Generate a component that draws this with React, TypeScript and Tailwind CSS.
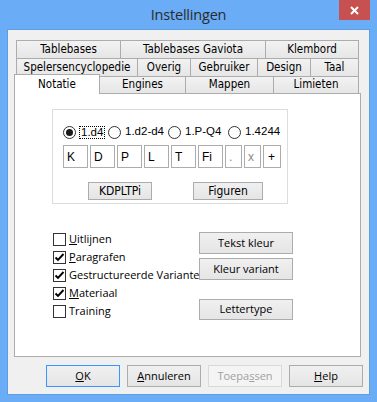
import React from "react";

function Check({ checked }: { checked?: boolean }) {
  return (
    <div className="w-[13px] h-[13px] border border-[#333333] bg-white flex items-center justify-center shrink-0">
      {checked && (
        <svg width="11" height="11" viewBox="0 0 11 11">
          <polyline points="1.5,5.5 4,8 9.5,2" fill="none" stroke="#000" strokeWidth="1.9" />
        </svg>
      )}
    </div>
  );
}

function Radio({ checked }: { checked?: boolean }) {
  return (
    <div className="w-[13px] h-[13px] rounded-full border border-[#333333] bg-white flex items-center justify-center shrink-0 mr-[3px]">
      {checked && <div className="w-[7px] h-[7px] rounded-full bg-[#1a1a1a]" />}
    </div>
  );
}

const btn =
  "border border-[#acacac] bg-linear-to-b from-[#f0f0f0] to-[#e5e5e5] flex items-center justify-center text-black";

const tab =
  "border-t border-[#acacac] bg-linear-to-b from-[#f2f2f2] to-[#e6e6e6] flex items-center justify-center";

export default function App() {
  return (
    <div className="w-[377px] h-[402px] bg-[#6aacf5] flex flex-col px-[7px] pb-[7px] relative overflow-hidden font-['Open_Sans',sans-serif]">
      <div className="h-[29px] flex items-center justify-center text-[14.5px] text-[#2b2b2b] tracking-[-0.2px]">
        Instellingen
      </div>
      <div className="absolute top-0 right-[7px] w-[31px] h-[20px] bg-[#c75050] flex items-center justify-center">
        <svg width="9" height="9" viewBox="0 0 9 9">
          <path d="M1 1 L8 8 M8 1 L1 8" stroke="#fff" strokeWidth="2" />
        </svg>
      </div>

      <div className="flex-1 border border-[#5b9ee6] bg-[#f0f0f0] flex flex-col">
        <div className="mt-[10px] ml-[6px] w-[347px] flex flex-col font-['DejaVu_Sans_Condensed','DejaVu_Sans',sans-serif] text-[11.5px] text-black">
          {/* row 1 */}
          <div className="flex h-[18px] ml-[2px]">
            <div className={`w-[104px] border-l ${tab}`}>Tablebases</div>
            <div className={`w-[145px] border-l ${tab}`}>Tablebases Gaviota</div>
            <div className={`w-[94px] border-l border-r ${tab}`}>Klembord</div>
          </div>
          {/* row 2 */}
          <div className="flex h-[18px] ml-[2px]">
            <div className={`w-[121px] border-l ${tab}`}>Spelersencyclopedie</div>
            <div className={`w-[53px] border-l ${tab}`}>Overig</div>
            <div className={`w-[67px] border-l ${tab}`}>Gebruiker</div>
            <div className={`w-[53px] border-l ${tab}`}>Design</div>
            <div className={`w-[49px] border-l border-r ${tab}`}>Taal</div>
          </div>
          {/* row 3 */}
          <div className="flex items-end -mt-[2px] h-[19px]">
            <div className="w-[86px] h-[20px] -mb-px relative z-10 border-l border-t border-r border-[#acacac] bg-white flex items-start justify-center pt-[1px]">Notatie</div>
            <div className={`w-[86px] h-[17px] border-r ${tab}`}>Engines</div>
            <div className={`w-[88px] h-[17px] border-r ${tab}`}>Mappen</div>
            <div className={`w-[85px] h-[17px] border-r ${tab}`}>Limieten</div>
          </div>
          {/* panel */}
          <div className="h-[264px] border border-[#acacac] bg-white flex flex-col font-['Open_Sans',sans-serif] text-[11px]">
            <div className="mt-[15px] ml-[37px] w-[236px] h-[95px] border border-[#dcdcdc] flex flex-col font-['Liberation_Sans',Arial,sans-serif] text-[11.5px]">
              <div className="mt-[14px] h-[16px] ml-[10px] flex items-center">
                <div className="w-[45px] flex items-center">
                  <Radio checked />
                  <span className="border border-dotted border-black px-[1px] leading-[11px]">1.d4</span>
                </div>
                <div className="w-[60px] flex items-center">
                  <Radio />
                  <span className="px-[1px]">1.d2-d4</span>
                </div>
                <div className="w-[60px] flex items-center">
                  <Radio />
                  <span className="px-[1px]">1.P-Q4</span>
                </div>
                <div className="flex items-center">
                  <Radio />
                  <span className="px-[1px]">1.4244</span>
                </div>
              </div>
              <div className="mt-[5px] ml-[10px] flex gap-[2px] h-[23px] text-[12px]">
                <div className="w-[25px] border border-[#acacac] bg-white pl-[3px] pt-[2px]">K</div>
                <div className="w-[25px] border border-[#acacac] bg-white pl-[3px] pt-[2px]">D</div>
                <div className="w-[25px] border border-[#acacac] bg-white pl-[3px] pt-[2px]">P</div>
                <div className="w-[25px] border border-[#acacac] bg-white pl-[3px] pt-[2px]">L</div>
                <div className="w-[25px] border border-[#acacac] bg-white pl-[3px] pt-[2px]">T</div>
                <div className="w-[25px] border border-[#acacac] bg-white pl-[3px] pt-[2px]">Fi</div>
                <div className="w-[17px] border border-[#acacac] bg-white pl-[3px] pt-[2px] text-[#8a8a8a]">.</div>
                <div className="w-[17px] border border-[#acacac] bg-white pl-[3px] pt-[2px] text-[#8a8a8a]">x</div>
                <div className="w-[18px] border border-[#acacac] bg-white pl-[4px] pt-[2px]">+</div>
              </div>
              <div className="mt-[14px] flex h-[18px] font-['DejaVu_Sans_Condensed','DejaVu_Sans',sans-serif] text-[12px]">
                <div className={`ml-[35px] w-[64px] ${btn}`}>KDPLTPi</div>
                <div className={`ml-[41px] w-[70px] ${btn}`}>Figuren</div>
              </div>
            </div>

            <div className="mt-[26px] flex">
              <div className="ml-[38px] w-[146px] flex flex-col">
                <div className="h-[18px] flex items-center gap-[3px] whitespace-nowrap overflow-hidden">
                  <Check />
                  <span><span className="underline">U</span>itlijnen</span>
                </div>
                <div className="h-[18px] flex items-center gap-[3px] whitespace-nowrap overflow-hidden">
                  <Check checked />
                  <span><span className="underline">P</span>aragrafen</span>
                </div>
                <div className="h-[18px] flex items-center gap-[3px] whitespace-nowrap overflow-hidden">
                  <Check checked />
                  <span>Gestructureerde Variante</span>
                </div>
                <div className="h-[18px] flex items-center gap-[3px] whitespace-nowrap overflow-hidden">
                  <Check checked />
                  <span><span className="underline">M</span>ateriaal</span>
                </div>
                <div className="h-[18px] flex items-center gap-[3px] whitespace-nowrap overflow-hidden">
                  <Check />
                  <span>Training</span>
                </div>
              </div>
              <div className="mt-[2px] w-[94px] flex flex-col">
                <div className={`h-[22px] ${btn}`}>Tekst kleur</div>
                <div className={`h-[22px] mt-[4px] ${btn}`}>Kleur variant</div>
                <div className={`h-[21px] mt-[19px] ${btn}`}>Lettertype</div>
              </div>
            </div>
          </div>
        </div>

        <div className="mt-[8px] flex justify-end gap-[7px] pr-[6px] text-[11px]">
          <div className="w-[74px] h-[22px] border border-[#3399ff] bg-linear-to-b from-[#f0f0f0] to-[#e5e5e5] flex items-center justify-center text-black">
            <span><span className="underline">O</span>K</span>
          </div>
          <div className={`w-[74px] h-[22px] ${btn}`}>
            <span><span className="underline">A</span>nnuleren</span>
          </div>
          <div className="w-[74px] h-[22px] border border-[#d9d9d9] bg-[#f4f4f4] flex items-center justify-center text-[#a0a0a0]">
            <span>Toepa<span className="underline">s</span>sen</span>
          </div>
          <div className={`w-[74px] h-[22px] ${btn}`}>
            <span><span className="underline">H</span>elp</span>
          </div>
        </div>
      </div>
    </div>
  );
}
